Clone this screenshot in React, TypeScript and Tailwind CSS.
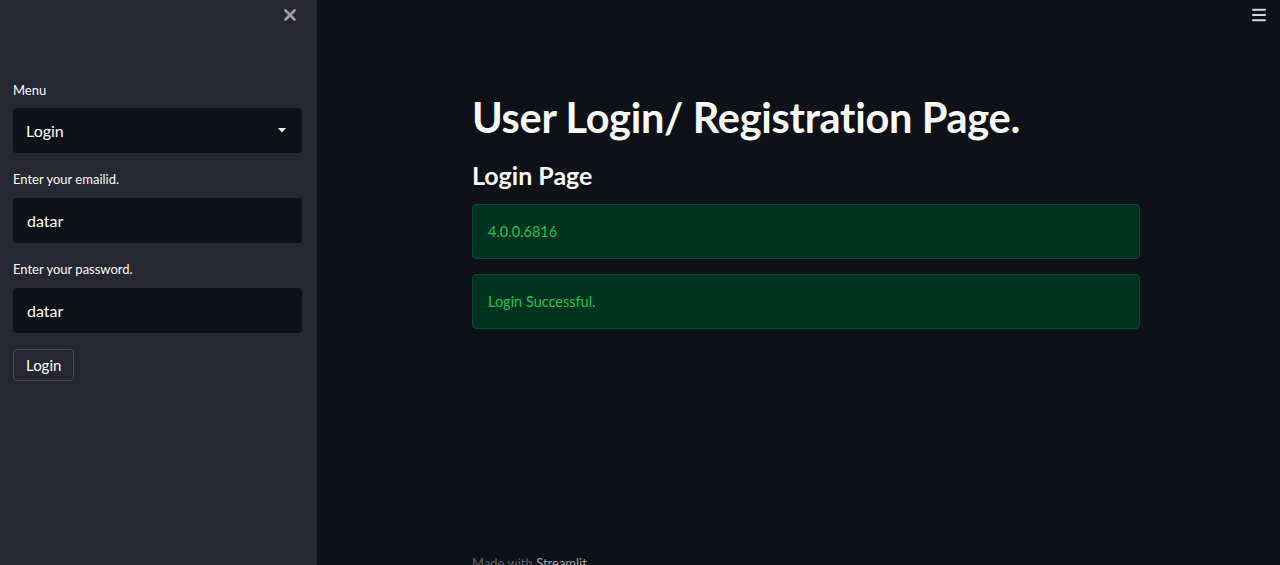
import { X, Menu } from "lucide-react";

const font = { fontFamily: '"Lato", "Noto Sans", sans-serif' };

function Field({ label, value }: { label: string; value: string }) {
  return (
    <div className="flex flex-col">
      <label className="text-[13px] text-[#fafafa] h-[18px] leading-[18px] mb-[10px]">{label}</label>
      <div className="h-[45px] rounded-[4px] bg-[#0e1117] flex items-center px-[14px] text-[16px] text-[#fafafa]">
        {value}
      </div>
    </div>
  );
}

export default function App() {
  return (
    <div className="flex h-[565px] w-full overflow-hidden bg-[#0e1117]" style={font}>
      <aside className="w-[317px] shrink-0 bg-[#262730] flex flex-col px-[13px] pr-[15px]">
        <div className="h-[29px] flex items-center justify-end pr-[3px]">
          <X size={18} strokeWidth={3.6} className="text-[#9d9da3]" />
        </div>
        <div className="h-[52px]" />
        <div className="flex flex-col">
          <label className="text-[13px] text-[#fafafa] h-[18px] leading-[18px] mb-[9px]">Menu</label>
          <div className="h-[45px] rounded-[4px] bg-[#0e1117] flex items-center justify-between pl-[13px] pr-[16px] text-[16px] text-[#fafafa]">
            <span>Login</span>
            <svg width="8" height="5" viewBox="0 0 8 5"><path d="M0 0h8L4 4.5z" fill="#fafafa" /></svg>
          </div>
        </div>
        <div className="h-[17px]" />
        <Field label="Enter your emailid." value="datar" />
        <div className="h-[17px]" />
        <Field label="Enter your password." value="datar" />
        <div className="h-[16px]" />
        <button className="self-start h-[32px] px-[12px] rounded-[4px] border border-[#4b4c55] text-[15px] text-[#fafafa] bg-[#262730]">
          Login
        </button>
      </aside>
      <main className="flex-1 relative">
        <div className="absolute right-[12px] top-[6px]">
          <Menu size={18} strokeWidth={2.6} className="text-[#d6d6d9]" />
        </div>
        <div className="ml-[155px] w-[668px] flex flex-col h-full">
          <h1 className="mt-[91px] text-[41.5px] leading-[52px] font-bold text-[#fafafa] tracking-[-0.3px]">
            User Login/ Registration Page.
          </h1>
          <h2 className="mt-[15px] text-[25px] leading-[34px] font-bold text-[#fafafa]">Login Page</h2>
          <div className="mt-[12px] h-[55px] rounded-[4px] bg-[#003220] border border-[#0a4a2c] flex items-center px-[15px] text-[14.5px] text-[#21c354]">
            4.0.0.6816
          </div>
          <div className="mt-[15px] h-[55px] rounded-[4px] bg-[#003220] border border-[#0a4a2c] flex items-center px-[15px] text-[14.5px] text-[#21c354]">
            Login Successful.
          </div>
          <div className="mt-auto text-[13px] leading-[16px] text-[#5d5e66] translate-y-[6px]">
            Made with <span className="text-[#a3a4ab]">Streamlit</span>
          </div>
        </div>
      </main>
    </div>
  );
}
